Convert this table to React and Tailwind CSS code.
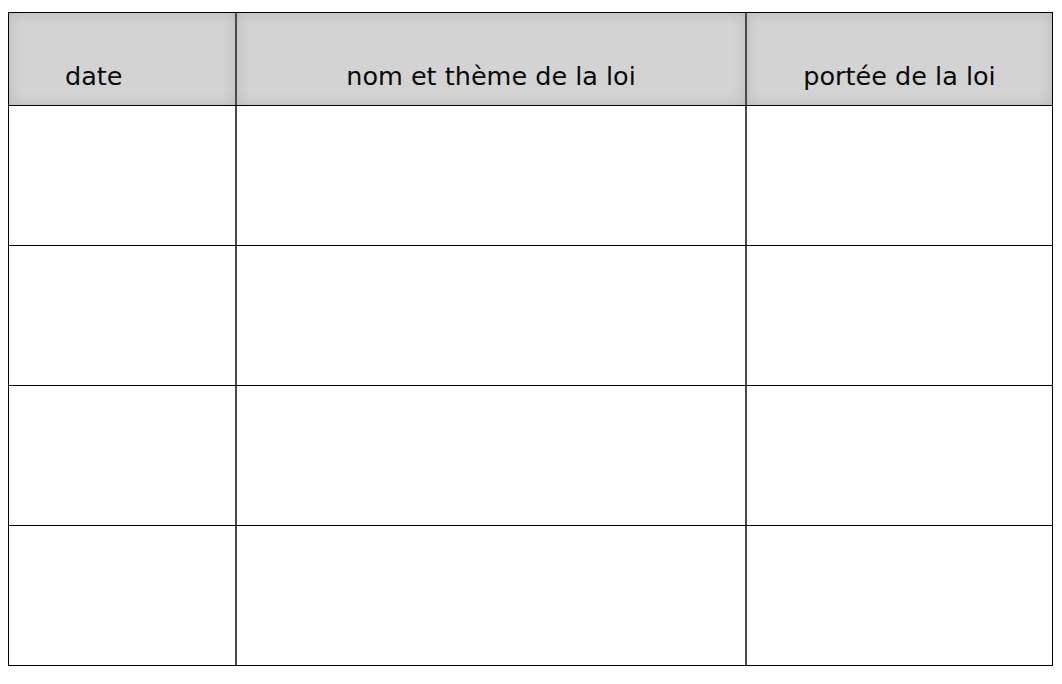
export default function App() {
  const rows = [0, 1, 2, 3];

  return (
    <div className="min-h-screen bg-white pt-[12px] pl-[8px]" style={{ width: 1062, height: 684 }}>
      <div className="w-[1045px] border border-black font-['DejaVu_Sans',sans-serif] text-[25.5px] text-[#0a0a0a]">
        {/* header */}
        <div className="grid grid-cols-[228px_510px_305px] h-[93px] border-b border-black">
          <div className="border-r-2 border-[#4a4a4a] bg-[#d3d3d3] shadow-[inset_0_0_14px_rgba(0,0,0,0.13)] pt-[51px] pl-[56px] leading-none">
            date
          </div>
          <div className="border-r-2 border-[#4a4a4a] bg-[#d3d3d3] shadow-[inset_0_0_14px_rgba(0,0,0,0.13)] pt-[51px] text-center leading-none">
            nom et thème de la loi
          </div>
          <div className="bg-[#d3d3d3] shadow-[inset_0_0_14px_rgba(0,0,0,0.13)] pt-[51px] text-center leading-none">
            portée de la loi
          </div>
        </div>

        {/* empty rows */}
        {rows.map((r) => (
          <div
            key={r}
            className={
              r < 3
                ? "grid grid-cols-[228px_510px_305px] h-[140px] border-b border-black"
                : "grid grid-cols-[228px_510px_305px] h-[139px]"
            }
          >
            <div className="border-r-2 border-[#4a4a4a]"></div>
            <div className="border-r-2 border-[#4a4a4a]"></div>
            <div></div>
          </div>
        ))}
      </div>
    </div>
  );
}
